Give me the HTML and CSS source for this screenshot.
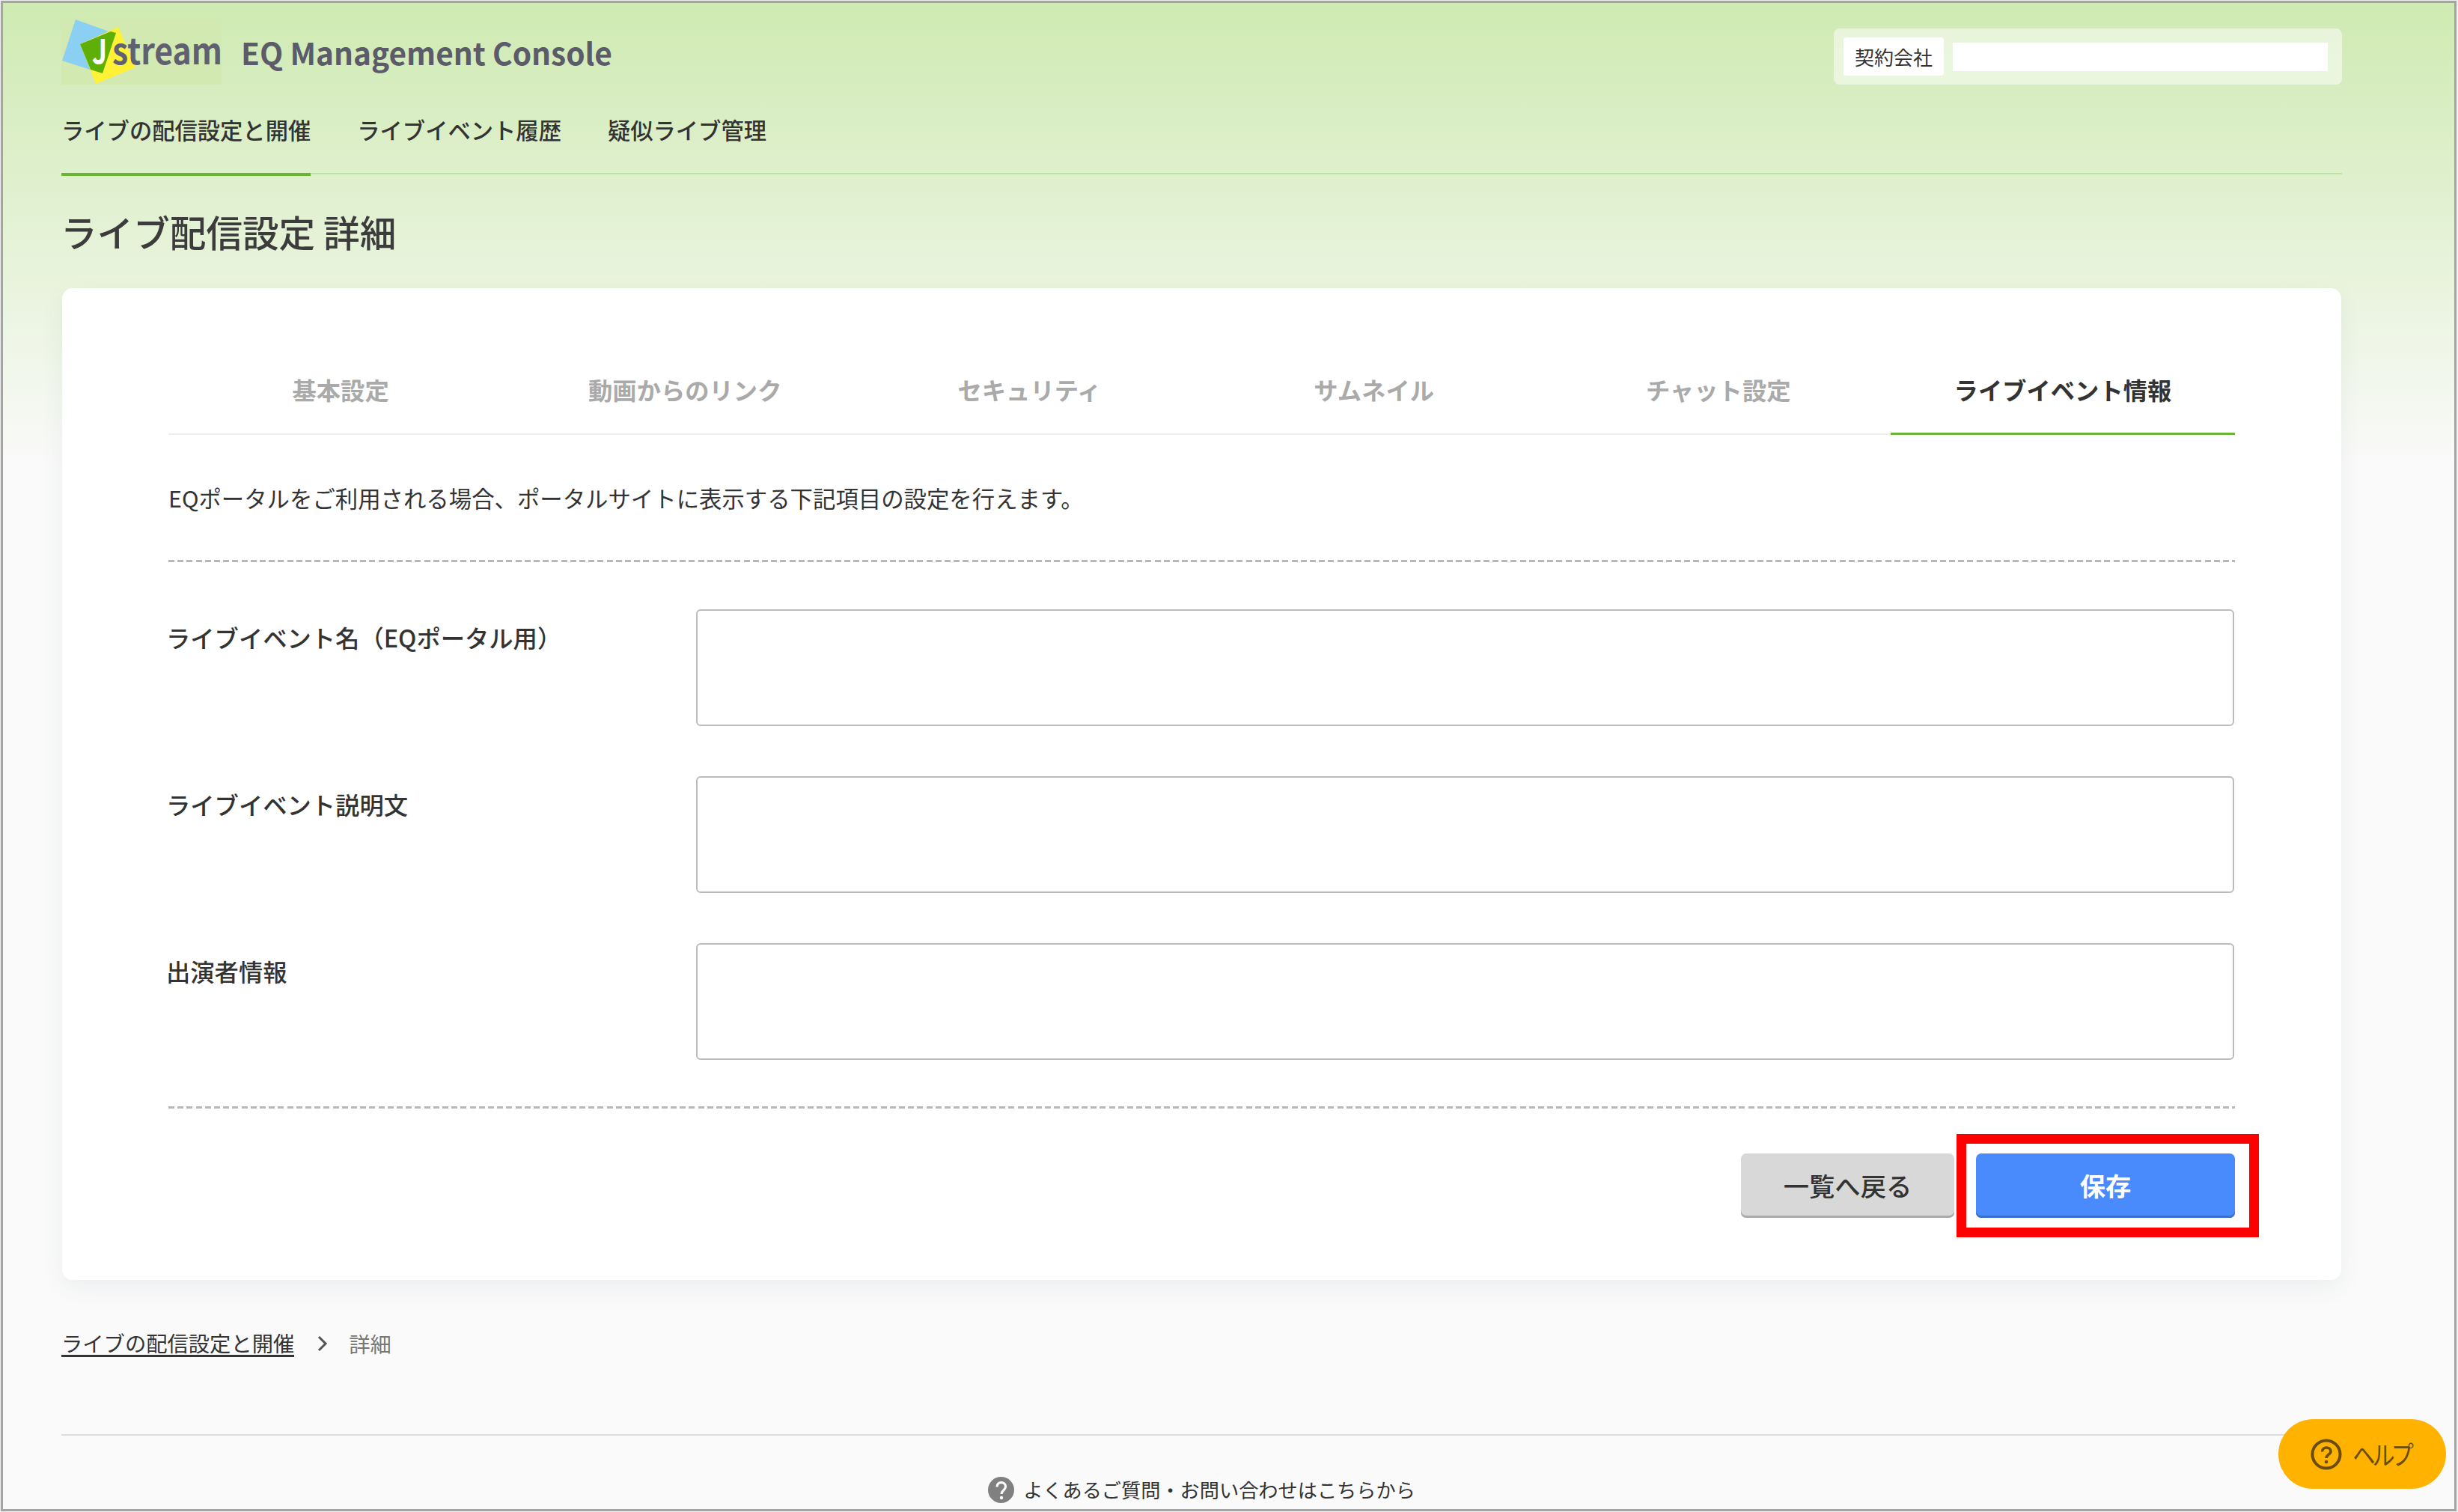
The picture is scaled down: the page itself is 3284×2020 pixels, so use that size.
FILE: index.html
```html
<!DOCTYPE html>
<html lang="ja">
<head>
    <meta charset="UTF-8">
    <title>EQ Management Console</title>
    <link rel="stylesheet" href="styles.css">
</head>
<body>
    <div class="page">
        <header class="header">
            <div class="brand">
                <svg class="logo" width="214" height="88" viewBox="0 0 214 88">
                    <rect width="214" height="88" fill="#d2e9b2"/>
                    <polygon points="19,1 66,18 38,68 1,56" fill="#8bd0f2"/>
                    <polygon points="76,11 99,65 46,87 25,34" fill="#fff135"/>
                    <polygon points="66,17 73,19 55,73 39,68 25,34" fill="#5fb006"/>
                    <text class="logo-j" x="41" y="60" textLength="20" lengthAdjust="spacingAndGlyphs">J</text>
                    <text class="logo-text" x="68" y="61" textLength="147" lengthAdjust="spacingAndGlyphs">stream</text>
                </svg>
                <span class="brand-name">EQ Management Console</span>
            </div>
            <div class="company">
                <span class="company-label">契約会社</span>
                <span class="company-name"></span>
            </div>
        </header>

        <nav class="nav">
            <a class="nav-item active">ライブの配信設定と開催</a>
            <a class="nav-item">ライブイベント履歴</a>
            <a class="nav-item">疑似ライブ管理</a>
        </nav>

        <h1 class="title">ライブ配信設定 詳細</h1>

        <main class="card">
            <div class="tabs">
                <div class="tab">基本設定</div>
                <div class="tab">動画からのリンク</div>
                <div class="tab">セキュリティ</div>
                <div class="tab">サムネイル</div>
                <div class="tab">チャット設定</div>
                <div class="tab active">ライブイベント情報</div>
            </div>
            <p class="description">EQポータルをご利用される場合、ポータルサイトに表示する下記項目の設定を行えます。</p>
            <div class="dashed"></div>
            <form class="form">
                <div class="form-row">
                    <label class="label">ライブイベント名（EQポータル用）</label>
                    <textarea class="input"></textarea>
                </div>
                <div class="form-row">
                    <label class="label">ライブイベント説明文</label>
                    <textarea class="input"></textarea>
                </div>
                <div class="form-row">
                    <label class="label">出演者情報</label>
                    <textarea class="input"></textarea>
                </div>
            </form>
            <div class="dashed"></div>
            <div class="buttons">
                <button class="btn btn-back" type="button">一覧へ戻る</button>
                <div class="save">
                    <button class="btn btn-save" type="button">保存</button>
                    <div class="highlight"></div>
                </div>
            </div>
        </main>

        <div class="breadcrumb">
            <a class="breadcrumb-link">ライブの配信設定と開催</a>
            <svg class="chevron" width="14" height="22" viewBox="0 0 14 22"><path d="M2 2l9 9-9 9" fill="none" stroke="#555" stroke-width="3"/></svg>
            <span class="breadcrumb-current">詳細</span>
        </div>

        <footer class="footer">
            <svg width="35" height="35" viewBox="0 0 35 35">
                <circle cx="17.5" cy="17.5" r="17.5" fill="#808080"/>
                <path d="M12 13.5c0-8 11.5-7.500 11.500-.5 0 5-5.500 5-5.500 10" fill="none" stroke="#fff" stroke-width="3.200"/>
                <circle cx="18" cy="28" r="2.200" fill="#fff"/>
            </svg>
            <span>よくあるご質問・お問い合わせはこちらから</span>
        </footer>
    </div>

    <div class="help">
        <svg width="42" height="42" viewBox="0 0 42 42">
            <circle cx="21" cy="21" r="18.500" fill="none" stroke="#6b4c0c" stroke-width="4"/>
            <path d="M15.500 17.500c0-7.500 11.500-7 11.500-.5 0 4.500-6 4-6 9" fill="none" stroke="#6b4c0c" stroke-width="3.600"/>
            <circle cx="21" cy="31" r="2.300" fill="#6b4c0c"/>
        </svg>
        <span class="help-text">ヘルプ</span>
    </div>
</body>
</html>
```
FILE: styles.css
```css
* { box-sizing: border-box; }
html { background: #eee; }
body { margin: 0; width: 3284px; height: 2020px; padding: 1px 2px 0 1px; overflow: hidden; font-family: "Noto Sans CJK JP", sans-serif; color: #333; }
.page { height: 2018px; border: 3px solid #a5a5a5; padding: 0 150px 0 78px; background: linear-gradient(#cfeab2 0, #fafafa 620px) #fafafa; overflow: hidden; }

.header { display: flex; justify-content: space-between; height: 109px; padding-top: 21px; }
.brand { display: flex; align-items: center; height: 88px; gap: 26px; }
.logo { display: block; overflow: visible; }
.logo-j { font: bold 45px "Noto Sans CJK JP", sans-serif; fill: #fff; }
.logo-text { font: bold 48px "Noto Sans CJK JP", sans-serif; fill: #5f6070; }
.brand-name { padding-top: 1px; font-size: 40.600px; font-weight: 700; color: #5b5b6a; line-height: 88px; }
.company { display: flex; align-items: center; width: 679px; height: 75px; margin-top: 13px; padding: 0 0 1px 13px; border-radius: 8px; background: rgba(255, 255, 255, 0.5); }
.company-label { width: 134px; height: 51px; border-radius: 4px; background: #fff; font-size: 26px; line-height: 51px; text-align: center; }
.company-name { width: 501px; height: 38px; margin: 2px 0 0 12px; background: #fff; }

.nav { display: flex; gap: 62px; height: 120px; border-bottom: 2px solid #bfe3a5; }
.nav-item { height: 122px; padding-top: 32px; font-size: 30.300px; font-weight: 500; line-height: 56px; }
.nav-item.active { border-bottom: 4px solid #6bb535; }
.title { margin: 44px 0 44px -1px; font-size: 48.600px; font-weight: 500; line-height: 64px; color: #3c3c3c; }

.card { height: 1325px; margin: 0 1px; padding: 97px 142px 0 142px; border-radius: 14px; background: #fff; box-shadow: 0 10px 30px rgba(60, 90, 100, 0.07); }
.tabs { display: flex; height: 99px; border-bottom: 2px solid #eee; }
.tab { flex: 1; height: 99px; font-size: 32.300px; font-weight: 700; line-height: 77px; text-align: center; color: #aaa; }
.tab.active { border-bottom: 3px solid #6bb535; color: #333; }
.description { margin: 57px 0 56px; font-size: 30.400px; line-height: 54px; }
.dashed { height: 3px; background: repeating-linear-gradient(90deg, #b8b8b8 0 8px, transparent 8px 12.200px); }
.form { display: flex; flex-direction: column; gap: 67px; padding: 63px 0 62px; }
.form-row { display: flex; height: 156px; }
.label { width: 708px; margin-left: -3px; padding-top: 10px; font-size: 32.300px; font-weight: 500; line-height: 54px; }
.input { width: 2055px; height: 156px; border: 2px solid #bbb; border-radius: 6px; background: #fff; resize: none; }
.buttons { display: flex; justify-content: flex-end; gap: 29px; padding-top: 60px; }
.btn { height: 86px; padding: 0 0 2px; border: 0; border-radius: 7px; font-family: inherit; font-size: 34.300px; }
.btn-back { width: 285px; background: #d8d8d8; box-shadow: inset 0 -3px #aaa; color: #333; font-weight: 500; }
.btn-save { display: block; width: 346px; background: #498bfc; box-shadow: inset 0 -3px #396fcf; color: #fff; font-weight: 700; }
.save { position: relative; }
.highlight { position: absolute; top: -26px; left: -26px; width: 404px; height: 138px; border: 13px solid #f00; }

.breadcrumb { display: flex; align-items: center; height: 206px; padding-bottom: 37px; font-size: 28.300px; }
.breadcrumb-link { border-bottom: 3px solid #333; line-height: 33px; }
.chevron { margin: 0 28px 0 31px; }
.breadcrumb-current { color: #777; }
.footer { display: flex; justify-content: center; align-items: center; gap: 12px; height: 98px; padding-top: 48px; border-top: 2px solid #ddd; font-size: 26.200px; }

.help { position: absolute; right: 16px; bottom: 31px; display: flex; align-items: center; width: 224px; height: 93px; padding-left: 43px; border-radius: 47px; background: #ffb300; }
.help-text { margin: -2px 0 0 14px; font-size: 35px; color: #6b4c0c; font-feature-settings: "palt"; letter-spacing: -3px; transform: scaleX(0.86); transform-origin: left; }
```
